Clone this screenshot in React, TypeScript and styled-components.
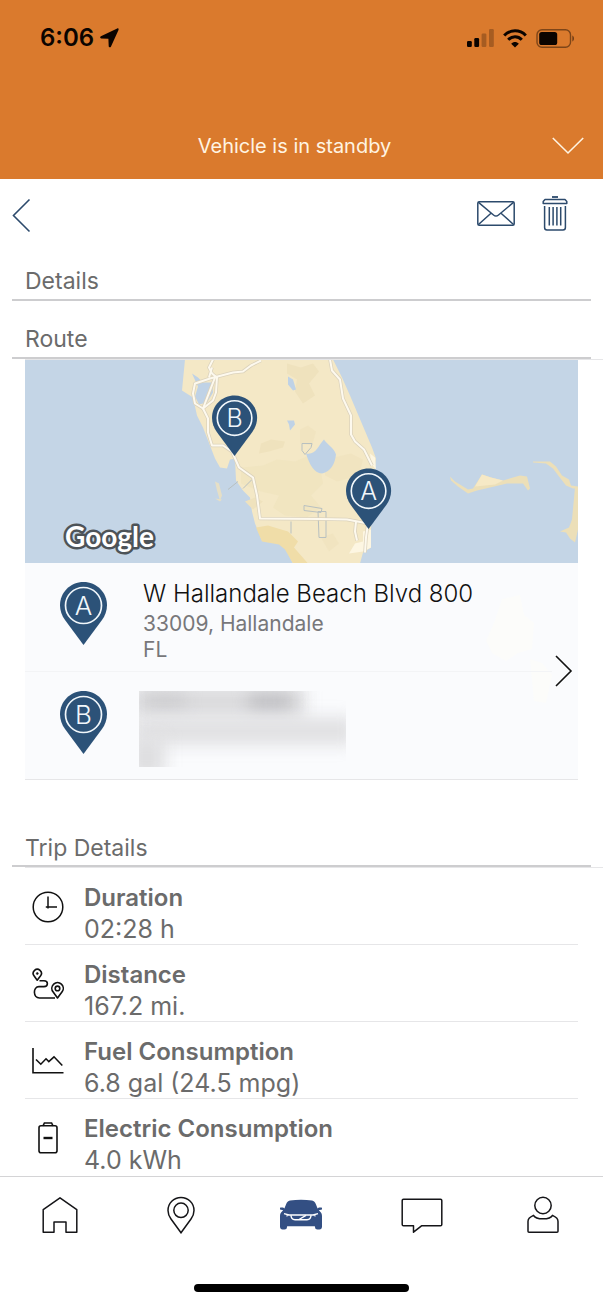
import React from 'react';
import styled, { createGlobalStyle } from 'styled-components';

const color = {
  orange: '#da7a2d',
  navy: '#2c5278',
  action: '#2c4a6c',
  text: '#6b6b6b',
  ink: '#111111',
  line: '#cdcdcf',
  lineLight: '#e6e6e8',
};

const GlobalStyle = createGlobalStyle`
  *, *::before, *::after { box-sizing: border-box; }
  body {
    margin: 0;
    background: #ffffff;
    color: ${color.text};
    font-family: Inter, "Liberation Sans", sans-serif;
  }
  h2, h3, p, ul, dl, dd { margin: 0; padding: 0; }
  ul { list-style: none; }
  svg { display: block; flex: none; }
`;

const Page = styled.div`
  display: flex;
  flex-direction: column;
  min-height: 100vh;
`;

const Header = styled.header`
  display: flex;
  flex-direction: column;
  justify-content: space-between;
  height: 179px;
  background: ${color.orange};
`;

const StatusBar = styled.div`
  display: flex;
  align-items: center;
  justify-content: space-between;
  height: 76px;
  padding: 0 28px 0 40px;
  color: #0b0400;
`;

const StatusGroup = styled.div<{ $gap: number }>`
  display: flex;
  align-items: center;
  gap: ${(p) => p.$gap}px;
`;

const Time = styled.time`
  font-size: 24px;
  font-weight: 600;
  line-height: 32px;
`;

const Banner = styled.div`
  display: grid;
  grid-template-columns: 56px 1fr 70px;
  align-items: center;
  height: 66px;
  color: #fff4e2;
`;

const BannerText = styled.p`
  grid-column: 2;
  text-align: center;
  font-size: 20px;
  font-weight: 400;
  line-height: 28px;
`;

const IconButton = styled.button`
  display: flex;
  align-items: center;
  justify-content: center;
  padding: 0;
  border: 0;
  background: none;
  color: inherit;
  cursor: pointer;
`;

const Toolbar = styled.div`
  display: flex;
  align-items: flex-start;
  justify-content: space-between;
  height: 64px;
  padding: 17px 35px 0 12px;
  color: ${color.action};
`;

const ToolbarActions = styled.div`
  display: flex;
  align-items: center;
  gap: 27px;
`;

const SectionTitle = styled.h2<{ $spaced?: boolean }>`
  height: ${(p) => (p.$spaced ? 87 : 58)}px;
  margin: 0 12px;
  padding: ${(p) => (p.$spaced ? 52 : 22)}px 13px 0;
  border-bottom: 2px solid ${color.line};
  font-size: 23px;
  font-weight: 400;
  line-height: 32px;
`;

const SectionBody = styled.div`
  margin-left: 25px;
  padding-right: 25px;
  border-top: 1px solid ${color.lineLight};
`;

const RouteCard = styled.section`
  position: relative;
  border-bottom: 1px solid ${color.lineLight};
  background: #fafbfd;
`;

const MapView = styled.div`
  height: 203px;
  overflow: hidden;
  background: #c4d5e6;
`;

const MapDrawing = styled.svg`
  width: 100%;
  height: 100%;
`;

const FadedLand = styled.svg`
  position: absolute;
  top: 203px;
  right: 0;
`;

const RouteBody = styled.div`
  position: relative;
  display: flex;
  align-items: center;
`;

const StopList = styled.ul`
  flex: 1;
`;

const Stop = styled.li`
  display: flex;
  gap: 36px;
  height: 108px;
  padding: 16px 0 0 35px;

  & + & {
    border-top: 1px solid #f3f4f6;
  }
`;

const StopMarker = styled.div`
  padding-top: 3px;
`;

const StreetName = styled.p`
  margin-bottom: 2px;
  color: ${color.ink};
  font-size: 24px;
  font-weight: 300;
  line-height: 30px;
`;

const Locality = styled.p`
  font-size: 21px;
  font-weight: 400;
  line-height: 26px;
  color: #77777a;
`;

const Redacted = styled.div`
  position: relative;
  width: 207px;
  height: 76px;
  margin: 3px 0 0 -4px;
  overflow: hidden;
`;

const Smudge = styled.span<{ $x: number; $y: number; $w: number; $h: number; $tone: string }>`
  position: absolute;
  left: ${(p) => p.$x}px;
  top: ${(p) => p.$y}px;
  width: ${(p) => p.$w}px;
  height: ${(p) => p.$h}px;
  background: ${(p) => p.$tone};
  filter: blur(8px);
`;

const OpenRoute = styled(IconButton)`
  width: 24px;
  height: 40px;
  margin-right: 2px;
  color: ${color.ink};
`;

const Metrics = styled.dl`
  width: 100%;
`;

const Metric = styled.div`
  display: flex;
  gap: 20px;
  height: 77px;
  padding: 14px 0 0 7px;
  border-bottom: 1px solid ${color.lineLight};

  &:last-child {
    border-bottom: 0;
  }
`;

const MetricIcon = styled.div`
  display: flex;
  align-items: center;
  width: 32px;
  height: 50px;
  color: ${color.ink};
`;

const MetricName = styled.dt`
  font-size: 24px;
  font-weight: 600;
  line-height: 32px;
`;

const MetricValue = styled.dd`
  font-size: 25px;
  font-weight: 400;
  line-height: 30px;
`;

const BottomBar = styled.footer`
  margin-top: auto;
  border-top: 1px solid #d4d4d6;
  background: #ffffff;
`;

const Tabs = styled.nav`
  display: grid;
  grid-template-columns: repeat(5, 1fr);
  height: 75px;
`;

const Tab = styled.a<{ $active?: boolean }>`
  display: flex;
  align-items: center;
  justify-content: center;
  color: ${(p) => (p.$active ? '#334f83' : '#151518')};
`;

const HomeIndicator = styled.div`
  width: 215px;
  height: 8px;
  margin: 32px auto 12px;
  border-radius: 4px;
  background: #000000;
`;

const PinShape = ({ letter }: { letter: string }) => (
  <>
    <path
      d="M23.5 0C10.5 0 0 10.3 0 23.2C0 28.600 1.900 33.600 5 38L23.500 63L42 38C45.100 33.600 47 28.600 47 23.200C47 10.300 36.500 0 23.500 0Z"
      fill={color.navy}
    />
    <circle cx="23.500" cy="23.500" r="18" fill="none" stroke="#f1f7fb" strokeWidth="1.700" />
    <text x="23.500" y="33" textAnchor="middle" fill="#f1f7fb" fontSize="26" fontWeight="300">
      {letter}
    </text>
  </>
);

const Pin = ({ letter }: { letter: string }) => (
  <svg width="47" height="63" viewBox="0 0 47 63">
    <PinShape letter={letter} />
  </svg>
);

const LAND =
  'M160 0L157 31L168 38L172 56L178 68L185 86L190 99L195 108L202 109L205 100L210 99L211 121L218 131L225 138L227 152L230 164L237 181L246 182L255 184L261 190L268 204H335L338 193L346 188V169L348 140L350 108L351 99L347 88L336 62L325 36L317 18L308 0Z';

const ROADS = [
  'M188 0L184 8L187 14L192 18L191 33L188 41L178 49L170 44L168 34L170 24L185 19L208 13L218 12L226 6L236 1',
  'M187 8L184 18M190 18L178 49L183 59V73L187 86H198L207 92L214 108L228 118L232 136L235 159L295 159.500L322 160L343 164',
  'M305 0L307 11L315 20L318 39L326 56L326 75L330 82L339 90L347 106',
  'M331 162L330 172L332 181M343 164L341 178L340 193',
];

const FloridaMap = () => (
  <MapDrawing viewBox="0 0 553 204" preserveAspectRatio="xMidYMid slice" role="img" aria-label="Route map of South Florida">
    <rect x="-400" width="1400" height="204" fill="#c4d5e6" />
    <path d={LAND} fill="#f4e8c6" />
    <g fill="#efe2bd">
      <path d="M262 4l14 4 12-4 6 8-10 12 6 12-12 8-8-12 2-12-10-6z" />
      <path d="M236 84l10-4 14 2-2 6-14 4-10 2z" />
      <path d="M216 108l22-2 14-6 18 2 14-6 10 8 4 20-12 12 10 12-14 10-22-2-12-8 6-12-18-4-20-8z" opacity=".6" />
      <path d="M300 100l26-6 12 6-4 16-22 6-12-6z" opacity=".7" />
      <path d="M231 168l12-2 20 6 10 10-4 6 14 16h-15l-8-14-6-5-17-3z" fill="#f0dda8" />
      <path d="M296 178l12-4 6 10-10 8z" opacity=".7" />
      <path d="M220 142l10-4 8 4-10 8z" />
      <path d="M275 70l8-4 8 6-4 14-12-2z" opacity=".7" />
    </g>
    <path d="M338 172l8-2v18l-8 4-14 2 6-10 8-2zM345 94l5 4 1 12-5-6z" fill="#fdf6e2" />
    <path d="M190 122l4 2 3 12-2 5-3-10zM190 139l7 1-2 2z" fill="#e6dfc6" />
    <g fill="#bfd2e6">
      <path d="M167 14l6 4 5 5h9l1 10-6 10-8 2-4-8 3-10z" />
      <path d="M263 17l5 3 3 10-3 1-5-6zM262 61l7 0 1 4-5 6-1-6z" />
      <path d="M299 80C301 84 309 88 311 95C310 104 306 112 297 114C289 114 284 104 281 94C291 96 293 86 299 80Z" />
    </g>
    <path
      d="M277 84l10 0-1 4-6 7-3-4zM279 146l18 3-1 4-17-2zM293 152h8v26h-7zM203 130l10-8M218 129l9-9M266 162v12"
      fill="none"
      stroke="#b8c0c0"
      strokeWidth="1"
    />
    <g fill="none" strokeLinejoin="round">
      {ROADS.map((d) => (
        <path key={d} d={d} stroke="#dbd2bc" strokeWidth="3.500" />
      ))}
      {ROADS.map((d) => (
        <path key={d} d={d} stroke="#fdf9ee" strokeWidth="2" />
      ))}
    </g>
    <g fill="#ecdfb8">
      <path d="M425 117L430 122L443 130L448 129L457 115L466 118L478 121L488 118L495 116L502 117L505 129L503 131L498 124L482 124L465 128L452 131L443 134L433 127L426 121Z" />
      <path d="M450 127L457 115L466 118L478 121L470 125Z" fill="#f6e9c6" />
      <path d="M508 102H525L531 107L537 116L544 120L546 126L553 127V129H548L541 126L534 117L528 109L521 104L508 103Z" />
      <path d="M550 128h3v42l-3 13-5-4-4-6-6-1 9-4 3-8z" />
    </g>
    <text
      x="40"
      y="187"
      fontFamily="Lato, Inter, sans-serif"
      fontSize="28"
      fontWeight="700"
      fill="#ffffff"
      stroke="#4d5358"
      strokeWidth="5"
      strokeLinejoin="round"
      paintOrder="stroke"
    >
      Google
    </text>
    <g transform="translate(187 36) scale(.96)">
      <PinShape letter="B" />
    </g>
    <g transform="translate(321 109) scale(.96)">
      <PinShape letter="A" />
    </g>
  </MapDrawing>
);

const LocationArrow = () => (
  <svg width="19" height="20" viewBox="0 0 19 20" fill="currentColor">
    <path d="M17.200.400L.900 8.200C-.200 8.800 0 10.300 1.200 10.400L8.400 10.700L8.700 18.200C8.800 19.500 10.300 19.800 10.900 18.700L18.500 1.900C18.900 .900 18.200 0 17.200 .400Z" />
  </svg>
);

const Signal = () => (
  <svg width="27" height="18" viewBox="0 0 27 18" fill="currentColor">
    <rect x="0" y="12" width="4.800" height="6" rx="1.200" />
    <rect x="7.300" y="9" width="4.800" height="9" rx="1.200" />
    <rect x="14.600" y="4.500" width="4.800" height="13.500" rx="1.200" opacity=".25" />
    <rect x="22" y="0" width="4.800" height="18" rx="1.200" opacity=".25" />
  </svg>
);

const Wifi = () => (
  <svg width="24" height="19" viewBox="0 0 24 19" fill="none" stroke="currentColor" strokeWidth="3">
    <path d="M1.200 6.500C7.200 .300 16.800 .300 22.800 6.500" />
    <path d="M5.200 10.700C9 6.700 15 6.700 18.800 10.700" />
    <path d="M12 18.500L8.200 14.800C10.300 12.500 13.700 12.500 15.800 14.800Z" fill="currentColor" stroke="none" />
  </svg>
);

const BatteryStatus = () => (
  <svg width="39" height="19" viewBox="0 0 39 19">
    <rect x="1" y=".800" width="33.500" height="17.400" rx="5" fill="none" stroke="currentColor" strokeOpacity=".45" strokeWidth="1.400" />
    <rect x="3.200" y="3" width="18" height="13" rx="2.600" fill="currentColor" />
    <path d="M36.300 6.500C38.600 7.500 38.600 11.500 36.300 12.500Z" fill="currentColor" opacity=".5" />
  </svg>
);

const Chevron = ({ w, h, d, weight }: { w: number; h: number; d: string; weight: number }) => (
  <svg width={w} height={h} viewBox={`0 0 ${w} ${h}`} fill="none" stroke="currentColor" strokeWidth={weight}>
    <path d={d} />
  </svg>
);

const MailIcon = () => (
  <svg width="38" height="25" viewBox="0 0 38 25" fill="none" stroke="currentColor" strokeWidth="1.500" strokeLinejoin="round">
    <rect x=".800" y=".800" width="36.400" height="23.400" rx="1.500" />
    <path d="M1.200 1.200L16.500 14C18 15.300 20 15.300 21.500 14L36.800 1.200M1.200 23.800L14 12.200M36.800 23.800L24 12.200" />
  </svg>
);

const TrashIcon = () => (
  <svg width="26" height="35" viewBox="0 0 26 35" fill="none" stroke="currentColor" strokeWidth="1.500" strokeLinejoin="round">
    <path d="M10 1H16" strokeWidth="1.800" />
    <path d="M3 3.600H23L24.800 5.500V7.600H1.200V5.500Z" />
    <path d="M2.600 10V31.500Q2.600 34 5 34H21Q23.400 34 23.400 31.500V10M7.300 11V29.500M11.100 11V29.500M14.900 11V29.500M18.700 11V29.500" />
  </svg>
);

const ClockIcon = () => (
  <svg width="32" height="32" viewBox="0 0 32 32" fill="none" stroke="currentColor" strokeWidth="1.500">
    <circle cx="16" cy="16" r="14.800" />
    <path d="M16 5.500V17.600M13.800 16H25" />
  </svg>
);

const DistanceIcon = () => (
  <svg width="32" height="32" viewBox="0 0 32 32" fill="none" stroke="currentColor" strokeWidth="1.600" strokeLinejoin="round">
    <path d="M5.200 12.200L2 7.800A4.100 4.100 0 1 1 8.600 7.800Z" />
    <circle cx="5.300" cy="5.500" r="1" fill="currentColor" strokeWidth=".600" />
    <path d="M7.500 12.800H12C16.500 12.800 16.500 18.600 12 18.600H7C.800 18.600 .800 30 7.500 30H23" />
    <path d="M25.500 30L21 23.800A5.700 5.700 0 1 1 30.100 23.800Z" />
    <circle cx="25.500" cy="20.400" r="2.300" />
  </svg>
);

const ChartIcon = () => (
  <svg width="32" height="26" viewBox="0 0 32 26" fill="none" stroke="currentColor" strokeWidth="1.600">
    <path d="M1 0V24.800H31.500M4 11.500L8.800 16.200L14 10.800L16.800 13.600L22 8.800L30.300 17.500" />
  </svg>
);

const BatteryIcon = () => (
  <svg width="32" height="32" viewBox="0 0 32 32" fill="none" stroke="currentColor" strokeWidth="1.600">
    <path d="M11 3.800L12.400 1H19.600L21 3.800" />
    <rect x="7" y="3.800" width="18" height="27" rx="2" />
    <path d="M11.500 16H20.500" strokeWidth="2.400" />
  </svg>
);

const HomeIcon = () => (
  <svg width="36" height="38" viewBox="0 0 36 38" fill="none" stroke="currentColor" strokeWidth="1.500" strokeLinejoin="round">
    <path d="M1.200 13.700L18 1.800L34.800 13.700V36.200H24V26H12V36.200H1.200Z" />
  </svg>
);

const PlaceIcon = () => (
  <svg width="28" height="38" viewBox="0 0 28 38" fill="none" stroke="currentColor" strokeWidth="1.500">
    <path d="M14 36.800L4 23C2 20.300 1 17.500 1 14.500C1 7.200 6.700 1.500 14 1.500S27 7.200 27 14.500C27 17.500 26 20.300 24 23Z" />
    <circle cx="14" cy="14.300" r="7.200" />
  </svg>
);

const CarIcon = () => (
  <svg width="44" height="32" viewBox="0 0 44 32" fill="currentColor">
    <path d="M11 1.600C18 .300 26 .300 33 1.600C35 2 36 3.200 36.900 5.200L38.600 9.600C38.800 8.600 41 8 43 8.700V10.500L39.800 11.200L41.500 13C42.700 14.400 43 15.500 43 17.500V27.500C43 29.500 42 30.500 40.500 30.500H38.500C37 30.500 36.200 29.800 36 28L35.800 27.200H8.200L8 28C7.800 29.800 7 30.500 5.500 30.500H3.500C2 30.500 1 29.500 1 27.500V17.500C1 15.500 1.300 14.400 2.500 13L4.200 11.200L1 10.500V8.700C3 8 5.200 8.600 5.400 9.600L7.100 5.200C8 3.200 9 2 11 1.600Z" />
    <path d="M5 14.600L10 16H34L39 14.600M7.500 17.300L9 16M36.500 17.300L35 16" fill="none" stroke="#fff" strokeWidth="1.300" />
    <path d="M12 16.300C12 19 13 20.700 16 20.700H28C31 20.700 32 19 32 16.300M20 20.500L27 16.300" fill="none" stroke="#fff" strokeWidth="1.400" />
  </svg>
);

const ChatIcon = () => (
  <svg width="42" height="38" viewBox="0 0 42 38" fill="none" stroke="currentColor" strokeWidth="1.500" strokeLinejoin="round">
    <path d="M2.500 3.200H39.500Q40.800 3.200 40.800 4.500V28.500Q40.800 29.800 39.500 29.800H20.500L12.500 36.200V29.800H2.500Q1.200 29.800 1.200 28.500V4.500Q1.200 3.200 2.500 3.200Z" />
  </svg>
);

const ProfileIcon = () => (
  <svg width="32" height="38" viewBox="0 0 32 38" fill="none" stroke="currentColor" strokeWidth="1.500" strokeLinejoin="round">
    <circle cx="16" cy="9.500" r="8.200" />
    <path d="M1 35.200V25.500C1 22.500 2.200 21.700 6.500 19.300C9 24 23 24 25.500 19.300C29.800 21.700 31 22.500 31 25.500V35.200Q31 36.200 30 36.200H2Q1 36.200 1 35.200Z" />
  </svg>
);

const metrics = [
  { name: 'Duration', value: '02:28 h', icon: <ClockIcon /> },
  { name: 'Distance', value: '167.2 mi.', icon: <DistanceIcon /> },
  { name: 'Fuel Consumption', value: '6.8 gal (24.5 mpg)', icon: <ChartIcon /> },
  { name: 'Electric Consumption', value: '4.0 kWh', icon: <BatteryIcon /> },
];

const tabs = [
  { label: 'Home', icon: <HomeIcon /> },
  { label: 'Map', icon: <PlaceIcon /> },
  { label: 'Vehicle', icon: <CarIcon />, active: true },
  { label: 'Messages', icon: <ChatIcon /> },
  { label: 'Profile', icon: <ProfileIcon /> },
];

export default function App() {
  return (
    <Page>
      <GlobalStyle />
      <Header>
        <StatusBar>
          <StatusGroup $gap={6}>
            <Time>6:06</Time>
            <LocationArrow />
          </StatusGroup>
          <StatusGroup $gap={9}>
            <Signal />
            <Wifi />
            <BatteryStatus />
          </StatusGroup>
        </StatusBar>
        <Banner>
          <BannerText>Vehicle is in standby</BannerText>
          <IconButton aria-label="Show vehicle status">
            <Chevron w={32} h={18} d="M.8 1L16 16L31.200 1" weight={1.6} />
          </IconButton>
        </Banner>
      </Header>

      <main>
        <Toolbar>
          <IconButton aria-label="Back">
            <Chevron w={19} h={38} d="M17.500 3.500L1.500 19.500L17.500 35.500" weight={1.6} />
          </IconButton>
          <ToolbarActions>
            <IconButton aria-label="Send by mail">
              <MailIcon />
            </IconButton>
            <IconButton aria-label="Delete trip">
              <TrashIcon />
            </IconButton>
          </ToolbarActions>
        </Toolbar>

        <SectionTitle>Details</SectionTitle>
        <SectionTitle>Route</SectionTitle>
        <SectionBody>
          <RouteCard>
            <MapView>
              <FloridaMap />
            </MapView>
            <FadedLand width="120" height="160" viewBox="0 0 120 160" fill="#fcfcfa">
              <path d="M44 36l18-4 4 20 10 8-2 26-14 4-12 8-14-8-6-12 8-18zM72 96l12 4 10 12-6 28-12-2z" />
            </FadedLand>
            <RouteBody>
              <StopList>
                <Stop>
                  <StopMarker>
                    <Pin letter="A" />
                  </StopMarker>
                  <div>
                    <StreetName>W Hallandale Beach Blvd 800</StreetName>
                    <Locality>33009, Hallandale</Locality>
                    <Locality>FL</Locality>
                  </div>
                </Stop>
                <Stop>
                  <StopMarker>
                    <Pin letter="B" />
                  </StopMarker>
                  <Redacted aria-label="Hidden address">
                    <Smudge $x={-6} $y={-6} $w={172} $h={34} $tone="#dcdcde" />
                    <Smudge $x={110} $y={4} $w={42} $h={14} $tone="#bcbcc0" />
                    <Smudge $x={6} $y={4} $w={40} $h={12} $tone="#cacacd" />
                    <Smudge $x={-6} $y={26} $w={222} $h={28} $tone="#e1e1e3" />
                    <Smudge $x={-10} $y={46} $w={36} $h={40} $tone="#dfdfe1" />
                  </Redacted>
                </Stop>
              </StopList>
              <OpenRoute aria-label="Open route">
                <Chevron w={18} h={34} d="M1 2L16 17L1 32" weight={1.6} />
              </OpenRoute>
            </RouteBody>
          </RouteCard>
        </SectionBody>

        <SectionTitle $spaced>Trip Details</SectionTitle>
        <SectionBody>
          <Metrics>
            {metrics.map((m) => (
              <Metric key={m.name}>
                <MetricIcon>{m.icon}</MetricIcon>
                <div>
                  <MetricName>{m.name}</MetricName>
                  <MetricValue>{m.value}</MetricValue>
                </div>
              </Metric>
            ))}
          </Metrics>
        </SectionBody>
      </main>

      <BottomBar>
        <Tabs aria-label="Main">
          {tabs.map((t) => (
            <Tab key={t.label} href={`#${t.label.toLowerCase()}`} aria-label={t.label} $active={t.active}>
              {t.icon}
            </Tab>
          ))}
        </Tabs>
        <HomeIndicator />
      </BottomBar>
    </Page>
  );
}
